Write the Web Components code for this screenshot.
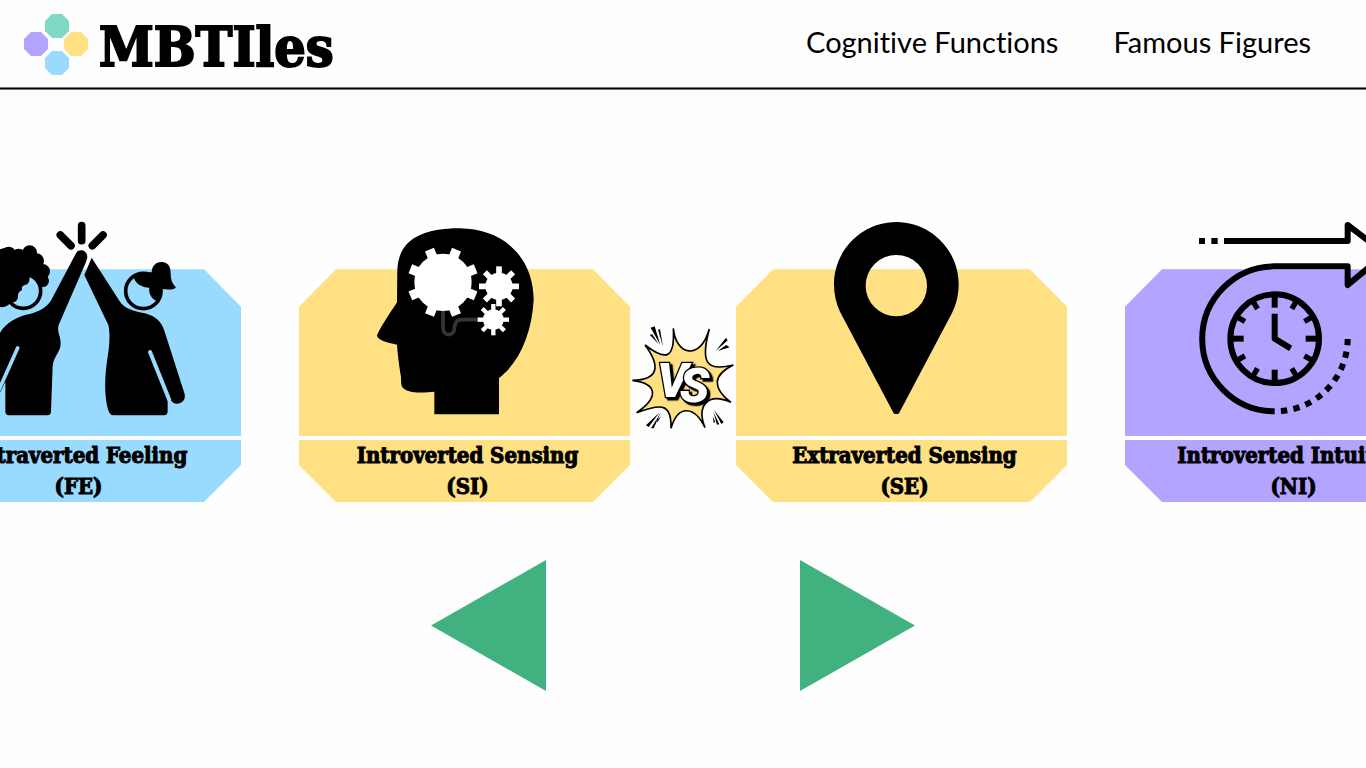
<!DOCTYPE html>
<html lang="en">
<head>
<meta charset="utf-8">
<meta name="viewport" content="width=device-width, initial-scale=1">
<title>MBTIles</title>
<style>
  body { margin: 0; background: #fefefe; color: #000; font-family: Lato, "Noto Sans", sans-serif; }
</style>
</head>
<body>
<mbt-header>
  <mbt-nav-link slot="nav" href="#functions">Cognitive Functions</mbt-nav-link>
  <mbt-nav-link slot="nav" href="#figures">Famous Figures</mbt-nav-link>
</mbt-header>
<mbt-carousel>
  <function-card tone="blue" icon="highfive">Extraverted Feeling<br>(FE)</function-card>
  <function-card tone="yellow" icon="head">Introverted Sensing<br>(SI)</function-card>
  <versus-badge></versus-badge>
  <function-card tone="yellow" icon="pin">Extraverted Sensing<br>(SE)</function-card>
  <function-card tone="purple" icon="clock">Introverted Intuition<br>(NI)</function-card>
  <arrow-button slot="controls" dir="prev"></arrow-button>
  <arrow-button slot="controls" dir="next"></arrow-button>
</mbt-carousel>

<script>
const attach = (el, html) => {
  const t = document.createElement('template');
  t.innerHTML = html;
  el.attachShadow({ mode: 'open' }).append(t.content.cloneNode(true));
};

customElements.define('mbt-header', class extends HTMLElement {
  constructor() {
    super();
    attach(this, `
      <style>
        :host { display: block; }
        header { display: flex; justify-content: space-between; align-items: center; height: 88px;
          padding: 0 55px 0 24px; box-sizing: border-box; border-bottom: 0;
          box-shadow: 0 1px #000, 0 2px #777, inset 0 -1px #777; }
        .brand { display: flex; align-items: center; gap: 11px; color: #000; text-decoration: none;
          font: bold 55px/64px "DejaVu Serif Condensed", "DejaVu Serif", serif; -webkit-text-stroke: 2px #000; }
        .brand span { padding-top: 6px; }
        svg { width: 64px; height: 64px; display: block; }
        nav { display: flex; gap: 55px; padding-bottom: 4px; }
      </style>
      <header>
        <a class="brand" href="#">
          <svg viewBox="0 0 64 64" aria-hidden="true">
            <defs><path id="o" d="M-5-12H5L12-5V5L5 12H-5L-12 5V-5Z"/></defs>
            <use href="#o" x="33" y="14" fill="#7fd8c1"/>
            <use href="#o" x="12" y="32" fill="#b2a4ff"/>
            <use href="#o" x="52" y="32" fill="#ffe083"/>
            <use href="#o" x="33" y="51" fill="#99daff"/>
          </svg>
          <span>MBTIles</span>
        </a>
        <nav><slot name="nav"></slot></nav>
      </header>`);
  }
});

customElements.define('mbt-nav-link', class extends HTMLElement {
  constructor() {
    super();
    attach(this, `
      <style>
        :host { display: block; }
        a { color: #000; text-decoration: none; font-size: 29px; line-height: 36px; white-space: nowrap;
          font-variant-ligatures: none; }
      </style>
      <a><slot></slot></a>`);
  }
  connectedCallback() { this.shadowRoot.querySelector('a').href = this.getAttribute('href'); }
});

customElements.define('mbt-carousel', class extends HTMLElement {
  constructor() {
    super();
    attach(this, `
      <style>
        :host { display: block; overflow: hidden; padding-top: 127px; }
        .track { display: flex; justify-content: center; }
        .controls { display: flex; justify-content: center; gap: 254px; padding: 58px 20px 40px 0; }
      </style>
      <main>
        <div class="track"><slot></slot></div>
        <div class="controls"><slot name="controls"></slot></div>
      </main>`);
  }
});

const spokes = (cx, cy, r, w, start) => [0, 45, 90, 135].map(a =>
  `<path d="M${cx} ${cy - r}V${cy + r}" stroke="#fff" stroke-width="${w}" transform="rotate(${a + start} ${cx} ${cy})"/>`).join('');
const gear = (cx, cy, body, tip, w, start) =>
  `<circle cx="${cx}" cy="${cy}" r="${body}" fill="#fff"/>` + spokes(cx, cy, tip, w, start);
const ticks = Array.from({ length: 12 }, (_, i) =>
  `<path d="M476 260V${i % 3 ? 283 : 293}" stroke-width="${i % 3 ? 16 : 18}" transform="rotate(${i * 30} 476 386)"/>`).join('');

/* Each icon is drawn on a plate 993 units wide; left is the plate's left edge. */
const icons = {
  highfive: { left: -270, art: `
    <g stroke="#000" stroke-width="23" stroke-linecap="round">
      <path d="M245 47V92M181 75L213 107M309 75L277 107"/>
    </g>
    <path d="M229 128C238 115 262 120 262 142L258 156L176 345C170 365 182 378 182 400C182 427 161 438 158 468L153 604Q153 616 142 616H27Q16 616 16 604V515L-20 590L-80 560L-10 390C5 345 45 322 85 313C120 306 145 288 155 268Z"/>
    <path d="M53 414L-10 555" stroke="#99daff" stroke-width="11" stroke-linecap="round"/>
    <circle cx="70" cy="243" r="52" fill="none" stroke="#000" stroke-width="11"/>
    <path d="M-80 140L10 115L100 130L125 160L140 225L119 233C112 215 100 205 88 202C90 215 84 224 74 225C65 228 65 235 66 240C55 246 53 254 54 262C52 274 42 279 32 278C22 290 5 294-5 290L-80 280Z"/>
    <circle cx="26" cy="132" r="22"/><circle cx="56" cy="139" r="23"/><circle cx="89" cy="128" r="22"/>
    <circle cx="109" cy="153" r="23"/><circle cx="128" cy="184" r="22"/><circle cx="128" cy="212" r="19"/>
    <circle cx="3" cy="147" r="21"/>
    <path d="M275 143L360 275C375 297 400 302 435 310C465 318 485 335 493 362L554 552C560 582 522 590 512 570L503 560V604Q503 616 492 616H342Q332 616 328 608C312 570 313 500 323 440C330 400 330 365 325 345L253 195Z"/>
    <path d="M450 426L508 570" stroke="#99daff" stroke-width="12" stroke-linecap="round"/>
    <circle cx="430" cy="243" r="53" fill="none" stroke="#000" stroke-width="11"/>
    <path d="M402 205C410 192 430 185 455 187C456 165 470 156 485 156C505 157 512 170 512 190C512 215 520 222 528 233C520 240 500 239 487 237C487 255 478 265 468 272C450 262 446 245 448 233C425 233 408 222 402 205Z"/>` },
  head: { left: 27, art: `
    <path d="M322 180C325 100 380 55 510 55C640 57 730 140 731 270C725 370 690 455 627 504V613H433V545C400 548 350 552 336 530C333 522 333 515 333 500C326 460 323 430 321 404C290 398 262 390 261 376C275 345 300 310 321 277Z"/>
    <path d="M459 300V355C459 380 493 380 493 355C495 335 500 329 520 329H575" fill="none" stroke="#383435" stroke-width="11"/>
    ${gear(459, 217, 86, 106, 29, 22.5)}${gear(627, 229, 41, 60, 17, 0)}${gear(610, 329, 31, 47, 13, 0)}` },
  pin: { left: 18, art: `
    <path fill-rule="evenodd" d="M499 36C602 36 686 120 686 223C686 253 680 282 666 309L509 606Q507 612 502 612H496Q491 612 489 606L330 305C318 280 312 253 312 223C312 120 396 36 499 36ZM499 135A92 92 0 1 0 499 319A92 92 0 1 0 499 135Z"/>` },
  clock: { left: 27, art: `
    <g fill="none" stroke="#000" stroke-width="18" stroke-linejoin="round">
      <path d="M249 93H267M286 93H305M324 93H695V45L808 131L695 225V169H476A217 217 0 0 0 476 604"/>
      <path d="M695 387A218 218 0 0 1 477 604" stroke-dasharray="19 19"/>
      <circle cx="476" cy="386" r="133"/>
      <path d="M476 311V386L524 415"/>
      ${ticks}
    </g>` }
};
const tones = { blue: '#99daff', yellow: '#ffe083', purple: '#b2a4ff' };

customElements.define('function-card', class extends HTMLElement {
  constructor() {
    super();
    const { left, art } = icons[this.getAttribute('icon')];
    const tone = tones[this.getAttribute('tone')];
    const right = left + 993;
    attach(this, `
      <style>
        :host { display: grid; flex: none; width: 331px; row-gap: 4px; margin-right: 58px; }
        :host(:nth-of-type(2)), :host(:nth-of-type(4)) { margin-right: 0; }
        svg { display: block; width: 100%; height: 221px; overflow: visible; }
        .label { background: ${tone}; text-align: center; padding-left: 6px;
          font: bold 22px/31px "DejaVu Serif Condensed", "DejaVu Serif", serif; -webkit-text-stroke: 1px #000;
          clip-path: polygon(0 0, 100% 0, 100% calc(100% - 37px), calc(100% - 37px) 100%, 37px 100%, 0 calc(100% - 37px)); }
      </style>
      <svg viewBox="${left} 15 993 663" aria-hidden="true">
        <path fill="${tone}" d="M${left} 678V290L${left + 111} 178H${right - 111}L${right} 290V678Z"/>
        ${art}
      </svg>
      <div class="label"><slot></slot></div>`);
  }
});

customElements.define('versus-badge', class extends HTMLElement {
  constructor() {
    super();
    attach(this, `
      <style>
        :host { display: block; flex: none; width: 106px; margin: 100px 0 0 0; }
        svg { display: block; width: 100%; height: 125px; }
        text { font: italic 900 146px Roboto, "Liberation Sans", sans-serif; fill: #fff; stroke: #000;
          stroke-width: 8px; paint-order: stroke; filter: drop-shadow(7px 7px 0 #000); }
      </style>
      <svg viewBox="15 0 318 375">
        <path fill="#ffe083" stroke="#000" stroke-width="5" d="M145 40C152 120 225 140 253 42C225 145 245 170 325 150C262 180 262 220 318 262C245 230 215 275 240 338C210 275 160 265 138 340C140 265 110 265 35 293C105 245 95 205 22 196C105 195 105 150 60 90C125 140 150 130 145 40Z"/>
        <path d="M77 38L89 34L106 90ZM74 59L82 58L100 86ZM99 44L105 42L114 95ZM303 68L308 76L272 108ZM304 90L314 97L278 108ZM104 292L63 331L71 336ZM108 292L78 340L86 340ZM108 304L98 321L94 317ZM267 285L296 322L289 327ZM265 291L283 328L276 329ZM263 304L271 321L266 323Z"/>
        <text x="96" y="247">V<tspan x="164" y="262">S</tspan></text>
      </svg>`);
  }
});

customElements.define('arrow-button', class extends HTMLElement {
  constructor() {
    super();
    const prev = this.getAttribute('dir') === 'prev';
    attach(this, `
      <style>
        :host { display: block; }
        button { display: block; width: 115px; height: 131px; padding: 0; border: 0; background: #41b27f; cursor: pointer;
          clip-path: polygon(${prev ? '100% 0, 100% 100%, 0 50%' : '0 0, 100% 50%, 0 100%'}); }
      </style>
      <button type="button" aria-label="${prev ? 'Previous' : 'Next'}"></button>`);
  }
});
</script>
</body>
</html>
